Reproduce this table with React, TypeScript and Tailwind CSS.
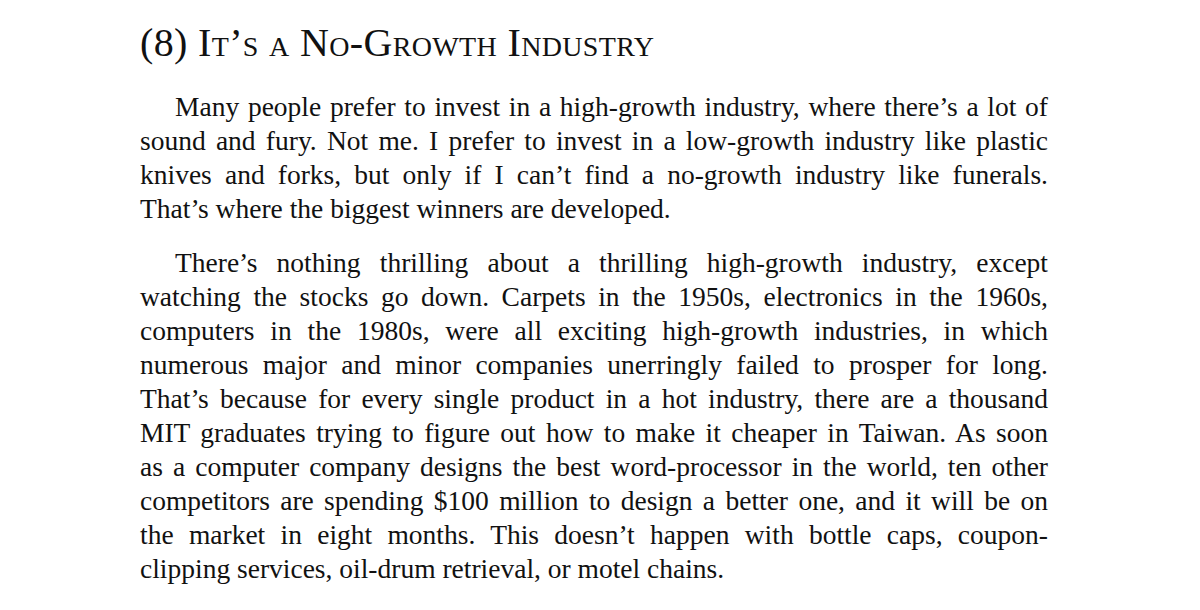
const paragraphs: string[][] = [
  [
    "Many people prefer to invest in a high-growth industry, where there’s a lot of",
    "sound and fury. Not me. I prefer to invest in a low-growth industry like plastic",
    "knives and forks, but only if I can’t find a no-growth industry like funerals.",
    "That’s where the biggest winners are developed.",
  ],
  [
    "There’s nothing thrilling about a thrilling high-growth industry, except",
    "watching the stocks go down. Carpets in the 1950s, electronics in the 1960s,",
    "computers in the 1980s, were all exciting high-growth industries, in which",
    "numerous major and minor companies unerringly failed to prosper for long.",
    "That’s because for every single product in a hot industry, there are a thousand",
    "MIT graduates trying to figure out how to make it cheaper in Taiwan. As soon",
    "as a computer company designs the best word-processor in the world, ten other",
    "competitors are spending $100 million to design a better one, and it will be on",
    "the market in eight months. This doesn’t happen with bottle caps, coupon-",
    "clipping services, oil-drum retrieval, or motel chains.",
  ],
];

const Paragraph = ({ lines, className }: { lines: string[]; className?: string }) => {
  return (
    <div className={className}>
      {lines.map((line, i) => {
        const last = i === lines.length - 1;
        return (
          <div
            key={i}
            className={`${i === 0 ? "pl-[35px]" : ""} ${last ? "text-left" : "text-justify [text-align-last:justify]"}`}
          >
            {line}
          </div>
        );
      })}
    </div>
  );
};

const App = () => {
  return (
    <div className="w-[1200px] h-[610px] bg-white overflow-hidden text-[#111111] font-['Liberation_Serif',serif]">
      <div className="ml-[140px] w-[908px] pt-[23px]">
        <h1 className="text-[40px] leading-[40px] font-normal tracking-[0.35px] [font-variant:small-caps] mb-[27px]">
          (8) It’s a No-Growth Industry
        </h1>
        <div className="text-[27.5px] leading-[34px]">
          <Paragraph lines={paragraphs[0]} className="mb-[20px]" />
          <Paragraph lines={paragraphs[1]} />
        </div>
      </div>
    </div>
  );
};

export default App;
